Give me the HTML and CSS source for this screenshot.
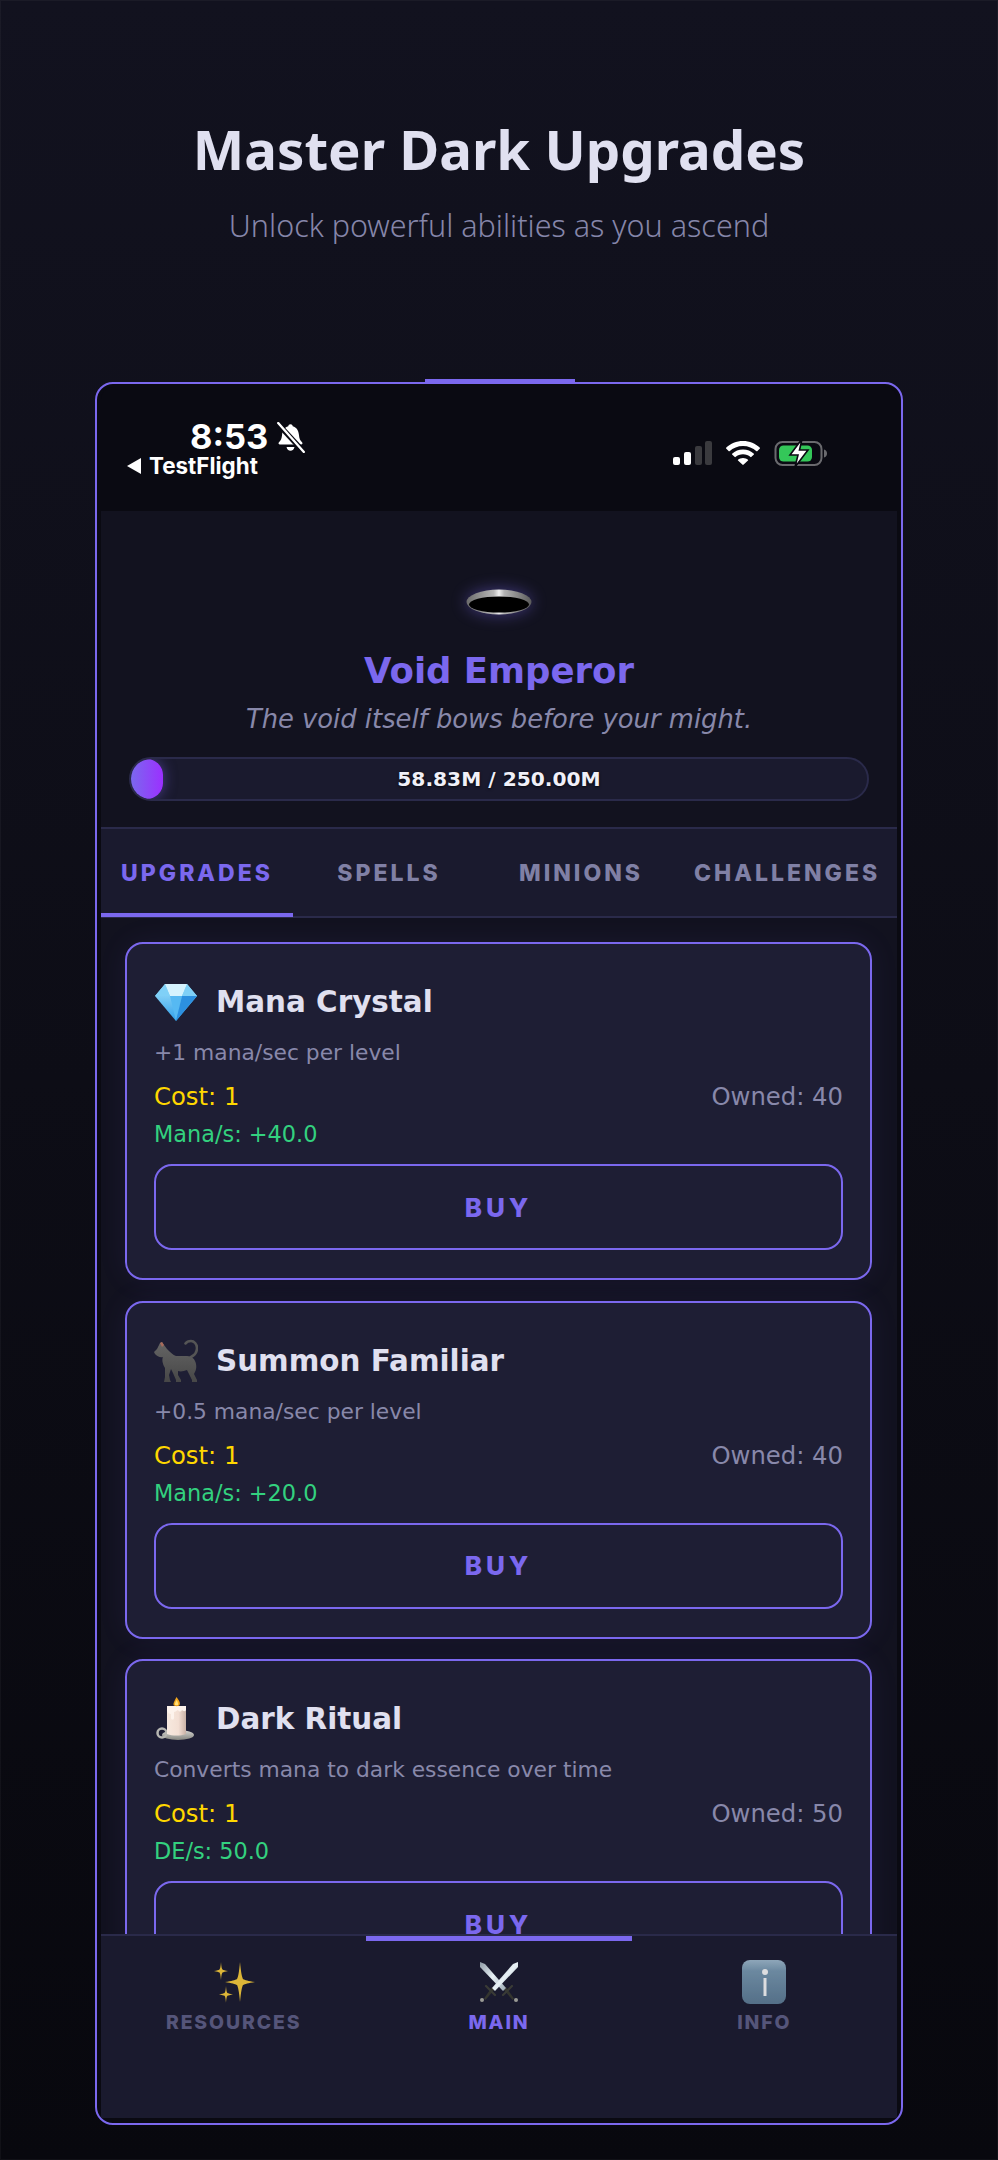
FILE: index.html
```html
<!DOCTYPE html>
<html lang="en">
<head>
<meta charset="utf-8">
<title>Master Dark Upgrades</title>
<link rel="stylesheet" href="styles.css">
</head>
<body>
<svg class="defs" width="0" height="0" aria-hidden="true">
  <defs>
    <linearGradient id="blade" x1="0" y1="0" x2="1" y2="1"><stop offset="0" stop-color="#8e9aa5"/><stop offset=".5" stop-color="#e8f1f6"/><stop offset="1" stop-color="#9aa8b2"/></linearGradient>
    <linearGradient id="gem" x1="0" y1="0" x2="0" y2="1"><stop offset="0" stop-color="#a6e4fb"/><stop offset="1" stop-color="#2f9fea"/></linearGradient>
    <linearGradient id="wax" x1="0" y1="0" x2="1" y2="0"><stop offset="0" stop-color="#f7e9df"/><stop offset=".6" stop-color="#f3dfd4"/><stop offset="1" stop-color="#c9b2a6"/></linearGradient>
    <linearGradient id="steel" x1="0" y1="0" x2="0" y2="1"><stop offset="0" stop-color="#d8d8d4"/><stop offset="1" stop-color="#85857f"/></linearGradient>
    <linearGradient id="info" x1="0" y1="0" x2="0" y2="1"><stop offset="0" stop-color="#a3bfd2"/><stop offset=".25" stop-color="#7a9cb4"/><stop offset="1" stop-color="#5f7f98"/></linearGradient>
    <linearGradient id="rim" x1="0" y1="0" x2="1" y2="0"><stop offset="0" stop-color="#6b6b6b"/><stop offset=".42" stop-color="#b8b8b8"/><stop offset=".5" stop-color="#efefef"/><stop offset=".58" stop-color="#b4b4b4"/><stop offset="1" stop-color="#5a5a5a"/></linearGradient>
    <linearGradient id="fur" x1="0" y1="0" x2="0" y2="1"><stop offset="0" stop-color="#656565"/><stop offset="1" stop-color="#474747"/></linearGradient>
  </defs>
</svg>
<main class="page">
  <header class="intro">
    <h1 class="intro-title">Master Dark Upgrades</h1>
    <p class="intro-sub">Unlock powerful abilities as you ascend</p>
  </header>
  <section class="phone">
    <span class="phone-accent"></span>
    <div class="screen">
      <div class="status">
        <div class="status-left">
          <div class="time-row">
            <span class="time">8:53</span>
            <svg class="bell" viewBox="0 0 27 29"><path fill="#fff" d="M13.500 2c1.200 0 2 .8 2.100 1.900 3.600 1 5.400 4 5.800 8 .3 3.400 1 5.200 2.900 7 .8.800.4 2.100-.9 2.100H3.600c-1.300 0-1.700-1.300-.9-2.100 1.900-1.800 2.600-3.600 2.900-7 .4-4 2.200-7 5.800-8C11.500 2.800 12.300 2 13.500 2zM9.800 23.500h7.400c-.3 2-1.800 3.500-3.700 3.500s-3.400-1.500-3.700-3.500z"/><path stroke="#0a0a12" stroke-width="5" d="M1 1l25 27"/><path stroke="#fff" stroke-width="2.200" stroke-linecap="round" d="M2 1l24 27"/></svg>
          </div>
          <div class="back-row">
            <span class="back-arrow"></span>
            <span class="back-label">TestFlight</span>
          </div>
        </div>
        <div class="status-right">
          <svg class="signal" viewBox="0 0 39 24"><rect x="0" y="16" width="7" height="8" rx="2" fill="#fff"/><rect x="11" y="11" width="7" height="13" rx="2" fill="#fff"/><rect x="22" y="5" width="7" height="19" rx="2" fill="#3a3a3e"/><rect x="32" y="0" width="7" height="24" rx="2" fill="#3a3a3e"/></svg>
          <svg class="wifi" viewBox="0 0 34 24"><path fill="#fff" d="M17 0c6.600 0 12.500 2.600 16.900 6.800.2.200.2.500 0 .7l-2.700 2.700c-.2.200-.5.200-.7 0C26.900 6.900 22.200 4.900 17 4.900S7.100 6.900 3.500 10.200c-.2.200-.5.200-.7 0L.1 7.500c-.2-.2-.2-.5 0-.7C4.500 2.600 10.400 0 17 0zm0 8.500c4.200 0 8 1.600 10.900 4.200.2.200.2.500 0 .7l-2.700 2.700c-.2.200-.5.200-.7 0-2-1.800-4.600-2.800-7.500-2.800s-5.500 1-7.500 2.800c-.2.200-.5.200-.7 0l-2.700-2.700c-.2-.2-.2-.5 0-.7C9 10.100 12.800 8.500 17 8.500zm0 8.400c2 0 3.700.7 5 1.900.2.200.2.500 0 .7l-4.600 4.300c-.2.200-.6.200-.8 0L12 19.500c-.2-.2-.2-.5 0-.7 1.300-1.200 3-1.900 5-1.900z"/></svg>
          <svg class="battery" viewBox="0 0 54 30"><rect x="1.500" y="4" width="46" height="23" rx="7" fill="none" stroke="#6a6a6e" stroke-width="2"/><rect x="5" y="7.500" width="33" height="16" rx="4.500" fill="#34c759"/><path d="M50 11.500c2 .5 3 2 3 4s-1 3.500-3 4z" fill="#6a6a6e"/><path fill="#fff" stroke="#0a0a12" stroke-width="1.600" d="M28 1L16 17h8l-3 12 13-17h-8.500z"/></svg>
        </div>
      </div>

      <div class="hero">
        <svg class="hole" viewBox="0 0 66 26"><ellipse cx="33" cy="13" rx="32.500" ry="12.500" fill="url(#rim)"/><ellipse cx="33" cy="15.500" rx="30" ry="8" fill="#000"/></svg>
        <h2 class="rank">Void Emperor</h2>
        <p class="tagline">The void itself bows before your might.</p>
        <div class="progress">
          <span class="progress-fill"></span>
          <span class="progress-text">58.83M / 250.00M</span>
        </div>
      </div>

      <nav class="tabs">
        <span class="tab tab-active">UPGRADES</span>
        <span class="tab">SPELLS</span>
        <span class="tab">MINIONS</span>
        <span class="tab">CHALLENGES</span>
      </nav>

      <div class="list">
        <article class="card">
          <div class="card-head">
            <svg class="card-icon" viewBox="0 0 44 44"><path fill="url(#gem)" d="M11 4h22l10 12-21 25L1 16z"/><path fill="#d5f3fe" d="M11 4h22l-5 12H16z"/><path fill="#7fd0f7" d="M11 4l5 12H1zM33 4l-5 12h15z"/><path fill="#56b9f2" d="M16 16h12l-6 25z"/><path fill="#2c90e0" d="M28 16h15L22 41z"/></svg>
            <h3 class="card-name">Mana Crystal</h3>
          </div>
          <p class="card-desc">+1 mana/sec per level</p>
          <div class="card-row"><span class="cost">Cost: 1</span><span class="owned">Owned: 40</span></div>
          <p class="effect">Mana/s: +40.0</p>
          <div class="buy">BUY</div>
        </article>
        <article class="card">
          <div class="card-head">
            <svg class="card-icon" viewBox="0 0 44 44"><path fill="none" stroke="#555" stroke-width="2.600" stroke-linecap="round" d="M37 18c4-2 6-5 6-9 0-4-3-7-6-7-2.500 0-4.500 1-5.500 2.500"/><path fill="url(#fur)" d="M0 13l3-3 3-6 2-1 2 3 3 4c3 3 6 6 9 7h11c5 0 8 3 9 8 1 5-1 8-2 10l3 6v2h-5v-2l-3-6-2-4c-3 1-6 2-9 1v4l3 5v2h-5v-2l-3-7-2-4-2 6 1 5 1 2h-7l1-5v-9c-3-5-3-9-2-11-3 1-6-1-8-3z"/><path fill="#a86a5a" d="M6 4l2-1 2 3-2 2z"/></svg>
            <h3 class="card-name">Summon Familiar</h3>
          </div>
          <p class="card-desc">+0.5 mana/sec per level</p>
          <div class="card-row"><span class="cost">Cost: 1</span><span class="owned">Owned: 40</span></div>
          <p class="effect">Mana/s: +20.0</p>
          <div class="buy">BUY</div>
        </article>
        <article class="card">
          <div class="card-head">
            <svg class="card-icon" viewBox="0 0 44 44"><ellipse cx="24" cy="38" rx="16" ry="5" fill="url(#steel)"/><circle cx="8" cy="36" r="4.500" fill="none" stroke="#b7b7b2" stroke-width="2.500"/><path fill="url(#wax)" d="M13 9h19v28c-6 2-13 2-19 0z"/><path fill="#fdf3ec" d="M13 9h19v4c-1 2-3 1-4 0-1 2-3 2-4 0-2 1-3 2-4 2v6c0 2-3 2-3 0v-4c-2 0-4-2-4-4z"/><path fill="#f5a81c" d="M22.500 0c3 4 4 6 3 8-.5 1.500-5 1.500-6 0-.5-2 1.500-5 3-8z"/><path fill="#ffe07a" d="M22.500 3c1.500 2 2 4 1.500 5h-3c-.5-1 .5-3 1.500-5z"/></svg>
            <h3 class="card-name">Dark Ritual</h3>
          </div>
          <p class="card-desc">Converts mana to dark essence over time</p>
          <div class="card-row"><span class="cost">Cost: 1</span><span class="owned">Owned: 50</span></div>
          <p class="effect">DE/s: 50.0</p>
          <div class="buy">BUY</div>
        </article>
      </div>

      <nav class="bottom">
        <div class="bottom-item">
          <svg class="bottom-icon" viewBox="0 0 44 44"><path fill="#ffd23a" d="M28 2c1 11 2 15 3 17 2 1 5 2 12 3-7 1-10 2-12 3-1 2-2 6-3 17-1-11-2-15-3-17-2-1-5-2-12-3 7-1 10-2 12-3 1-2 2-6 3-17z"/><path fill="#ffd23a" d="M9 2c.4 5 .8 6.500 1.500 7.500 1 .5 2.500 1 5.500 1.500-3 .5-4.500 1-5.500 1.500C9.800 13.500 9.400 15 9 20c-.4-5-.8-6.500-1.500-7.500C6.500 12 5 11.500 2 11c3-.5 4.500-1 5.500-1.500C8.200 8.500 8.600 7 9 2zM14 26c.4 5 .8 6 1.400 7 1 .5 2.600 1 5.600 1.400-3 .5-4.600 1-5.600 1.400-.6 1-1 2-1.400 7-.4-5-.8-6-1.400-7-1-.4-2.600-.9-5.600-1.400 3-.4 4.600-.9 5.600-1.400.6-1 1-2 1.400-7z"/></svg>
          <span class="bottom-label">RESOURCES</span>
        </div>
        <div class="bottom-item bottom-active">
          <svg class="bottom-icon" viewBox="0 0 44 44"><path fill="#34352f" d="M15 27l2.500 2.500-9 10.500-1.500-1.500zM29 27l-2.500 2.500 9 10.500 1.500-1.500z"/><path stroke="#3a3b36" stroke-width="2.200" stroke-linecap="round" d="M9 26l9 9M35 26l-9 9"/><path fill="url(#blade)" d="M3 2l5 2 21 24-3 3L3 7z"/><path fill="url(#blade)" d="M41 2l-5 2-21 24 3 3L41 7z"/><circle cx="5" cy="40" r="2" fill="#9a9a94"/><circle cx="39" cy="40" r="2" fill="#9a9a94"/></svg>
          <span class="bottom-label">MAIN</span>
        </div>
        <div class="bottom-item">
          <svg class="bottom-icon" viewBox="0 0 44 44"><rect x="0" y="0" width="44" height="44" rx="8" fill="url(#info)"/><circle cx="23" cy="12" r="3" fill="#fff"/><path fill="#fff" d="M21.500 18h3v18h-3z"/></svg>
          <span class="bottom-label">INFO</span>
        </div>
      </nav>
    </div>
  </section>
</main>
</body>
</html>
```

FILE: styles.css
```css
* { box-sizing: border-box; }
html, body { margin: 0; padding: 0; }
body {
  width: 998px;
  height: 2160px;
  overflow: hidden;
  background: linear-gradient(180deg, #12121f 0%, #0d0d16 50%, #08080e 100%);
  box-shadow: inset 0 0 0 1px rgba(255, 255, 255, .04);
  font-family: "DejaVu Sans", sans-serif;
}
.defs { display: block; height: 0; }
h1, h2, h3, p { margin: 0; font-weight: inherit; }

.page { display: flex; flex-direction: column; height: 2160px; }

.intro { height: 382px; padding-top: 113px; text-align: center; }
.intro-title {
  font-family: "Noto Sans", sans-serif;
  font-size: 54.6px;
  font-weight: 700;
  line-height: 72px;
  color: #e0e0f0;
}
.intro-sub {
  margin-top: 20px;
  font-family: "Noto Sans", sans-serif;
  font-size: 30.500px;
  font-weight: 300;
  line-height: 40px;
  color: #8686aa;
}

.phone {
  position: relative;
  width: 808px;
  height: 1743px;
  margin-left: 95px;
  padding: 3px 4px 5px;
  border: 2px solid #7b68ee;
  border-radius: 18px;
  background: #0a0a12;
}
.phone-accent {
  position: absolute;
  top: -5px;
  left: 328px;
  width: 150px;
  height: 5px;
  background: #7b68ee;
}
.screen { display: flex; flex-direction: column; height: 100%; overflow: hidden; border-radius: 12px 12px 0 0; }

.status {
  flex: none;
  display: flex;
  justify-content: space-between;
  height: 124px;
  background: #0a0a12;
  padding: 34px 69px 0 26px;
}
.time-row { display: flex; align-items: center; gap: 8px; margin-left: 63px; height: 32px; }
.time { font-family: "Inter", sans-serif; font-weight: 700; font-size: 34.500px; line-height: 32px; color: #fff; }
.bell { width: 29px; height: 31px; }
.back-row { display: flex; align-items: center; gap: 8px; height: 26px; }
.back-arrow {
  width: 0; height: 0;
  border-style: solid;
  border-width: 8px 14px 8px 0;
  border-color: transparent #fff transparent transparent;
}
.back-label { font-family: "Inter", sans-serif; font-weight: 700; font-size: 22.400px; line-height: 26px; color: #fff; }
.status-right { display: flex; align-items: flex-start; gap: 14px; padding-top: 20px; }
.signal { width: 39px; height: 24px; }
.wifi { width: 34px; height: 24px; }
.battery { width: 54px; height: 30px; margin-top: -3px; }

.hero {
  flex: none;
  height: 316px;
  padding: 78px 28px 0;
  background: #12121f;
  display: flex;
  flex-direction: column;
  align-items: center;
}
.hole { width: 66px; height: 26px; flex: none; filter: drop-shadow(0 0 8px rgba(123, 104, 238, .45)); }
.rank { margin-top: 34px; font-size: 35.500px; line-height: 44px; font-weight: 700; color: #7b68ee; }
.tagline { margin-top: 11px; font-size: 25.800px; line-height: 30px; font-style: italic; color: #8888aa; }
.progress {
  position: relative;
  display: flex;
  align-items: center;
  justify-content: center;
  width: 740px;
  height: 44px;
  margin-top: 23px;
  border: 2px solid #2a2a4a;
  border-radius: 22px;
  background: #1a1a2e;
  overflow: hidden;
}
.progress-fill {
  position: absolute;
  left: 0; top: 0; bottom: 0;
  width: 32px;
  border-radius: 20px;
  background: linear-gradient(90deg, #7b68ee, #9b30ff);
  box-shadow: 0 0 14px rgba(123, 104, 238, .5);
}
.progress-text { position: relative; font-size: 20.200px; font-weight: 700; color: #f0f0f8; text-shadow: 0 1px 3px rgba(0,0,0,.8); }

.tabs {
  flex: none;
  display: grid;
  grid-template-columns: 192px 192px 192px 1fr;
  height: 91px;
  background: #1a1a2e;
  border-top: 2px solid #2a2a4a;
  border-bottom: 2px solid #2a2a4a;
}
.tab {
  display: flex;
  align-items: center;
  justify-content: center;
  padding-top: 3px;
  font-family: "Inter", sans-serif;
  font-size: 23px;
  font-weight: 800;
  letter-spacing: 3px;
  color: #8080a5;
  border-bottom: 4px solid transparent;
  margin-bottom: -1px;
}
.tab-active { color: #7b68ee; border-bottom-color: #7b68ee; }

.list {
  flex: 1;
  min-height: 0;
  overflow: hidden;
  padding: 24px 25px 0 24px;
  background: #12121f;
  display: flex;
  flex-direction: column;
  gap: 20.500px;
}
.card {
  flex: none;
  height: 338px;
  padding: 36px 27px 27px;
  border: 2px solid #7b68ee;
  border-radius: 18px;
  background: #1e1e34;
  box-shadow: 0 0 30px rgba(123, 104, 238, .08);
}
.card-head { display: flex; align-items: center; gap: 18px; height: 44px; }
.card-icon { width: 44px; height: 44px; flex: none; }
.card-name { font-size: 29.400px; font-weight: 700; line-height: 44px; color: #e0e0f0; }
.card-desc { margin-top: 15px; font-size: 21.800px; line-height: 28px; color: #8888aa; }
.card-row { display: flex; justify-content: space-between; margin-top: 15px; font-size: 24.300px; line-height: 30px; }
.cost { color: #ffd700; }
.owned { color: #8888aa; }
.effect { margin-top: 9px; font-size: 22.400px; line-height: 26px; color: #33d17f; }
.buy {
  display: flex;
  align-items: center;
  justify-content: center;
  height: 86px;
  margin-top: 17px;
  border: 2px solid #7b68ee;
  border-radius: 18px;
  font-family: "Inter", sans-serif;
  font-size: 26px;
  font-weight: 800;
  letter-spacing: 4px;
  color: #7b68ee;
}

.bottom {
  position: relative;
  flex: none;
  height: 184px;
  display: grid;
  grid-template-columns: repeat(3, 1fr);
  background: #1a1a2e;
  border-top: 2px solid #2a2a4a;
}
.bottom-item {
  display: flex;
  flex-direction: column;
  align-items: center;
  padding-top: 19px;
  border-top: 5px solid transparent;
  color: #55557a;
}
.bottom-active { border-top-color: #7b68ee; color: #7b68ee; }
.bottom-icon { width: 44px; height: 44px; flex: none; }
.bottom-item:not(.bottom-active) .bottom-icon { opacity: .85; }
.bottom-label {
  margin-top: 6px;
  font-family: "Inter", sans-serif;
  font-size: 19.400px;
  font-weight: 800;
  letter-spacing: 1.900px;
  line-height: 24px;
}
```
